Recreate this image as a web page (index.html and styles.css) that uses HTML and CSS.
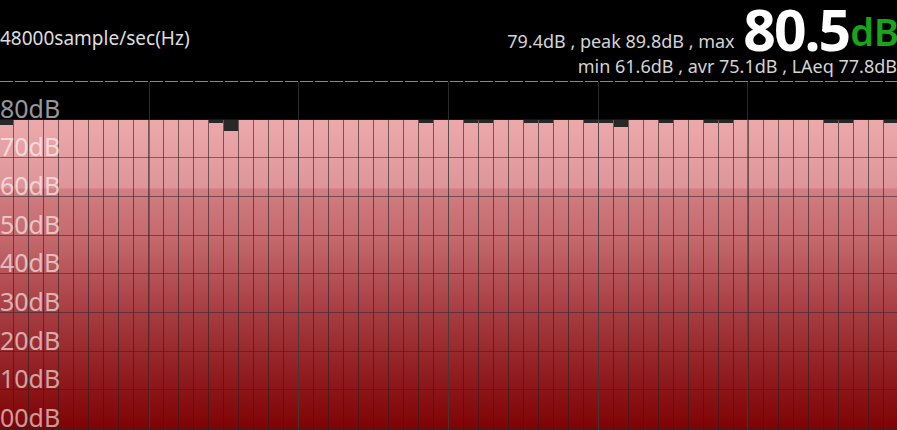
FILE: index.html
```html
<!DOCTYPE html>
<html lang="en">
<head>
  <meta charset="UTF-8" />
  <meta name="viewport" content="width=device-width, initial-scale=1.0" />
  <title>Sound Meter</title>
  <link rel="stylesheet" href="styles.css">
</head>
<body>
  <header class="meter-head">
    <div class="rate">48000sample/sec(Hz)</div>
    <div class="readout">
      <div class="now"><span class="stats">79.4dB , peak 89.8dB , max </span><span class="level">80.5</span><span class="unit">dB</span></div>
      <div class="stats">min 61.6dB , avr 75.1dB , LAeq 77.8dB</div>
    </div>
  </header>

  <section class="chart">
    <div class="limit"></div>
    <div class="headroom"></div>
    <div class="bars" id="bars"></div>

    <div class="grid-v">
      <div></div><div></div><div></div><div></div><div></div><div></div>
    </div>

    <div class="grid-h">
      <div class="row"><span>80dB</span></div>
      <div class="row"><span>70dB</span></div>
      <div class="row"><span>60dB</span></div>
      <div class="row"><span>50dB</span></div>
      <div class="row"><span>40dB</span></div>
      <div class="row"><span>30dB</span></div>
      <div class="row"><span>20dB</span></div>
      <div class="row"><span>10dB</span></div>
      <div class="row"><span>00dB</span></div>
    </div>
  </section>

  <script>
    // gap (px) between the 80dB line and the top of each band
    const caps = { 0: 5, 14: 3, 15: 11, 28: 3, 31: 3, 32: 3, 35: 3, 36: 3, 39: 3, 40: 3, 41: 7, 44: 3, 47: 3, 48: 3, 55: 3, 56: 3, 59: 3 };
    const bars = document.getElementById('bars');

    for (let i = 0; i < 60; i++) {
      const col = document.createElement('div');
      col.className = 'col';
      if (caps[i]) {
        const cap = document.createElement('div');
        cap.className = 'cap';
        cap.style.height = caps[i] + 'px';
        col.appendChild(cap);
      }
      bars.appendChild(col);
    }
  </script>
</body>
</html>
```

FILE: styles.css
```css
* {
  box-sizing: border-box;
}

body {
  margin: 0;
  width: 897px;
  height: 430px;
  overflow: hidden;
  background: #000;
  color: #d6d6d6;
  font-family: 'Noto Sans', 'Open Sans', sans-serif;
}

.meter-head {
  display: flex;
  justify-content: space-between;
  align-items: flex-start;
  height: 81px;
}

.rate {
  font-size: 19px;
  line-height: 19px;
  padding-top: 29px;
  color: #dedede;
}

.readout {
  display: flex;
  flex-direction: column;
  align-items: flex-end;
}

.now {
  font-size: 57px;
  line-height: 55px;
  margin-top: 2px;
  margin-right: -2px;
  white-space: nowrap;
}

.stats {
  font-size: 18px;
  line-height: 18px;
  color: #d4d4d4;
  white-space: pre;
}

.now .stats {
  vertical-align: 3px;
  margin-right: 4px;
}

.level {
  font-weight: 700;
  color: #fff;
  letter-spacing: -2px;
}

.unit {
  font-size: 38px;
  line-height: 38px;
  font-weight: 600;
  color: #19a519;
  vertical-align: 5px;
  margin-left: 1px;
}

.chart {
  position: relative;
  height: 349px;
  overflow: hidden;
}

.limit {
  height: 1px;
  background: repeating-linear-gradient(90deg, #9a7e80 0 13px, transparent 13px 15px);
}

.headroom {
  height: 38px;
}

.bars {
  display: flex;
  height: 310px;
  margin-left: -1px;
  background: linear-gradient(180deg,
    #eca9ac 0px,
    #de9599 68px,
    #d17e82 69px,
    #c56a6e 116px,
    #a63c41 193px,
    #8b1518 270px,
    #7f0204 310px);
}

.col {
  flex: 0 0 15px;
  border-right: 1px solid rgba(40, 30, 30, 0.6);
}

.cap {
  background: #282828;
}

.grid-v {
  position: absolute;
  top: 1px;
  left: 0;
  right: 0;
  bottom: 0;
  display: flex;
}

.grid-v div {
  flex: 1;
  border-right: 1px solid rgba(70, 70, 70, 0.6);
}

.grid-v div:last-child {
  border-right: none;
}

.grid-h {
  position: absolute;
  top: 0;
  left: 0;
  right: 0;
  height: 348px;
  display: grid;
  grid-template-rows: repeat(9, 1fr);
}

.row {
  display: flex;
  align-items: flex-end;
  border-bottom: 1px solid rgba(40, 40, 40, 0.55);
}

.row span {
  font-size: 25px;
  line-height: 22px;
  color: rgba(255, 255, 255, 0.6);
}
```
